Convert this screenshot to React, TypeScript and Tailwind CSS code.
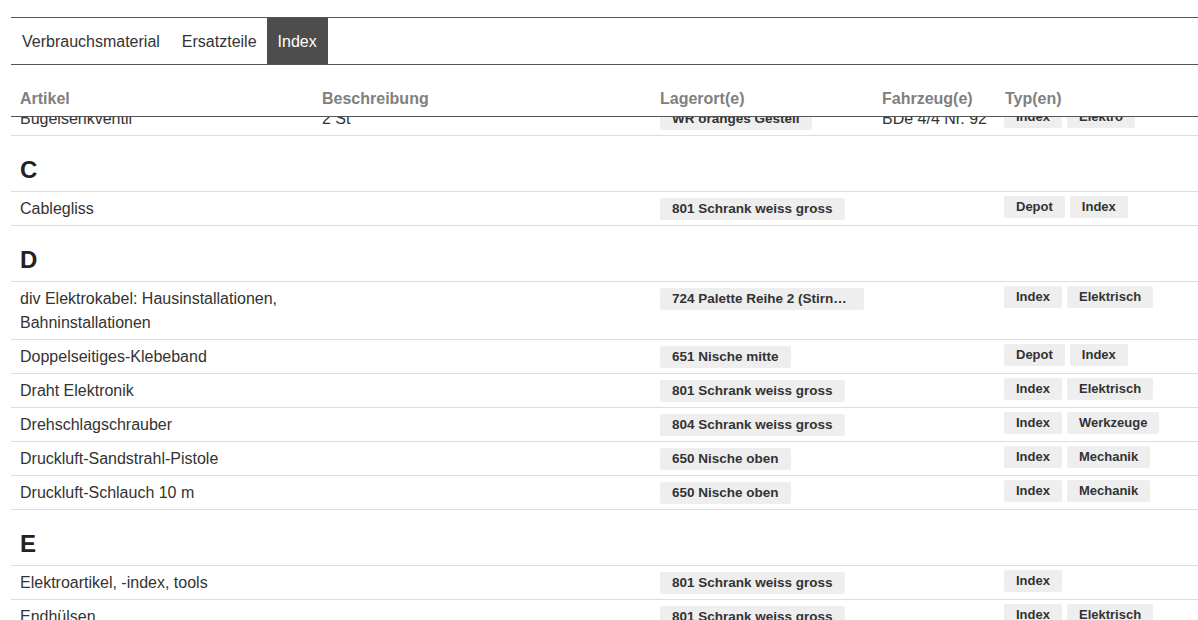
import type { ReactNode } from "react";

type Item = {
  name: string;
  desc?: string;
  place: string;
  vehicle?: string;
  types: string[];
};

type Group = { letter?: string; items: Item[] };

const groups: Group[] = [
  {
    items: [
      {
        name: "Bügelsenkventil",
        desc: "2 St",
        place: "WR oranges Gestell",
        vehicle: "BDe 4/4 Nr. 92",
        types: ["Index", "Elektro"],
      },
    ],
  },
  {
    letter: "C",
    items: [{ name: "Cablegliss", place: "801 Schrank weiss gross", types: ["Depot", "Index"] }],
  },
  {
    letter: "D",
    items: [
      {
        name: "div Elektrokabel: Hausinstallationen, Bahninstallationen",
        place: "724 Palette Reihe 2 (Stirnseite)",
        types: ["Index", "Elektrisch"],
      },
      { name: "Doppelseitiges-Klebeband", place: "651 Nische mitte", types: ["Depot", "Index"] },
      { name: "Draht Elektronik", place: "801 Schrank weiss gross", types: ["Index", "Elektrisch"] },
      { name: "Drehschlagschrauber", place: "804 Schrank weiss gross", types: ["Index", "Werkzeuge"] },
      { name: "Druckluft-Sandstrahl-Pistole", place: "650 Nische oben", types: ["Index", "Mechanik"] },
      { name: "Druckluft-Schlauch 10 m", place: "650 Nische oben", types: ["Index", "Mechanik"] },
    ],
  },
  {
    letter: "E",
    items: [
      { name: "Elektroartikel, -index, tools", place: "801 Schrank weiss gross", types: ["Index"] },
      { name: "Endhülsen", place: "801 Schrank weiss gross", types: ["Index", "Elektrisch"] },
    ],
  },
];

const tabs = ["Verbrauchsmaterial", "Ersatzteile", "Index"];
const columns = ["Artikel", "Beschreibung", "Lagerort(e)", "Fahrzeug(e)", "Typ(en)"];
const grid = "grid grid-cols-[302px_338px_222px_123px_1fr]";

function Badge({ children, className = "" }: { children: ReactNode; className?: string }) {
  return (
    <span
      className={`block shrink-0 rounded-[2px] bg-[#eeeeee] px-[12px] py-[3px] font-bold leading-[16px] text-[#333] ${className}`}
    >
      {children}
    </span>
  );
}

function Row({ item }: { item: Item }) {
  return (
    <div className={`${grid} border-b border-[#dddddd] pt-[5px] pb-[4px] leading-[24px]`}>
      <div className="pl-[9px] pr-[20px]">{item.name}</div>
      <div className="pl-[9px]">{item.desc}</div>
      <div className="flex items-start pl-[9px]">
        <Badge className="mt-[1px] max-w-[204px] truncate text-[13.5px]">{item.place}</Badge>
      </div>
      <div className="pl-[9px]">{item.vehicle}</div>
      <div className="flex items-start gap-[5px] pl-[8px]">
        {item.types.map((t) => (
          <Badge key={t} className="-mt-[1px] text-[13px]">
            {t}
          </Badge>
        ))}
      </div>
    </div>
  );
}

export default function App() {
  return (
    <div className="h-[620px] overflow-hidden bg-white pl-[11px] pt-[17px] font-['Liberation_Sans',Arial,sans-serif] text-[16px] text-[#333]">
      <div className="relative z-10 bg-white">
        <nav className="flex h-[48px] border-y border-[#555]">
          {tabs.map((t) => (
            <span
              key={t}
              className={`px-[11px] leading-[48px] ${t === "Index" ? "-ml-[1px] bg-[#4d4d4d] text-white" : "text-[#333]"}`}
            >
              {t}
            </span>
          ))}
        </nav>
        <div className={`${grid} border-b border-[#555] pt-[22px] pb-[5px] font-bold leading-[24px] text-[#808080]`}>
          {columns.map((c) => (
            <div key={c} className="pl-[9px]">
              {c}
            </div>
          ))}
        </div>
      </div>

      <div className="-mt-[15px]">
        {groups.map((g, i) => (
          <section key={i}>
            {g.letter && (
              <h3 className="border-b border-[#dddddd] pl-[9px] pt-[20px] pb-[7px] text-[24px] font-bold leading-[28px] text-[#222]">
                {g.letter}
              </h3>
            )}
            {g.items.map((item) => (
              <Row key={item.name} item={item} />
            ))}
          </section>
        ))}
      </div>
    </div>
  );
}
